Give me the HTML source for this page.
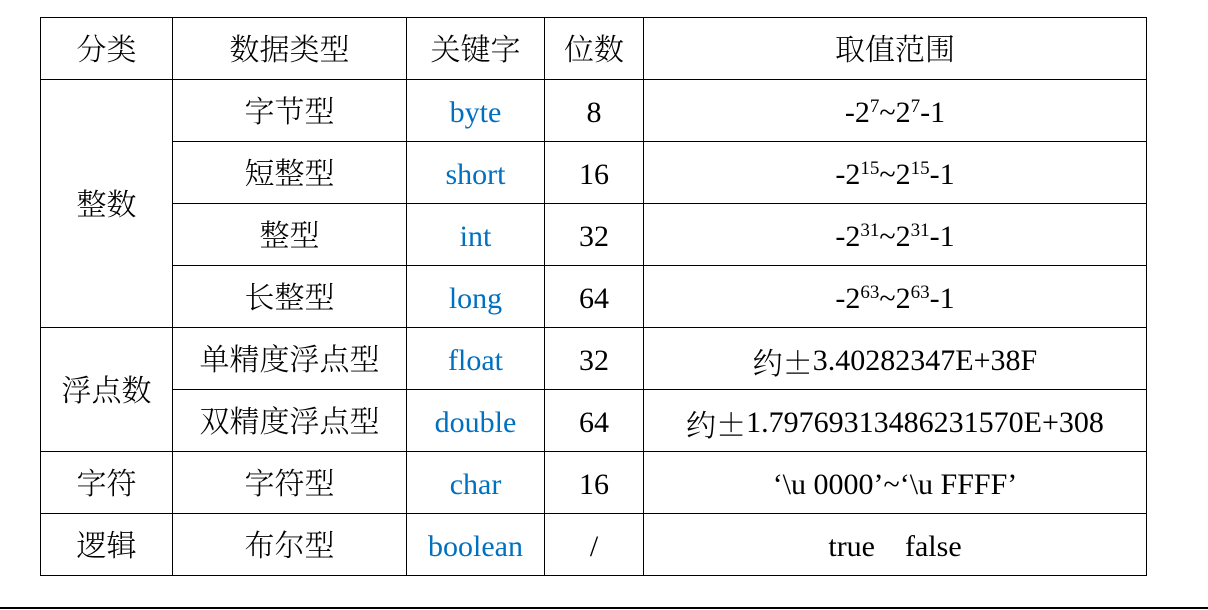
<!DOCTYPE html>
<html><head><meta charset="utf-8"><style>
html,body{margin:0;padding:0;background:#fff;width:1208px;height:610px;overflow:hidden;position:relative}
table{position:absolute;left:40px;top:17px;border-collapse:collapse;table-layout:fixed;width:1106px;
font-family:"Liberation Serif","Noto Serif CJK SC",serif;font-size:30px;color:#000}
td{border:1px solid #000;text-align:center;vertical-align:middle;padding:4px 0 0 0;height:57px;line-height:30px;box-sizing:content-box}
.c{font-size:30px;font-weight:300}
.pm{font-family:"Noto Serif CJK SC",serif;font-weight:300;font-size:30px;line-height:30px;display:inline-block;vertical-align:top}
.b{color:#0070C0}
sup{font-size:19px;vertical-align:0;position:relative;top:-10px;line-height:0}
.line{position:absolute;left:0;top:607px;width:1208px;height:2px;background:#000}
</style></head><body>
<table>
<colgroup><col style="width:132px"><col style="width:234px"><col style="width:138px"><col style="width:99px"><col style="width:503px"></colgroup>
<tr><td class="c">分类</td><td class="c">数据类型</td><td class="c">关键字</td><td class="c">位数</td><td class="c">取值范围</td></tr>
<tr><td rowspan="4" class="c">整数</td><td class="c">字节型</td><td class="b">byte</td><td>8</td><td>-2<sup>7</sup>~2<sup>7</sup>-1</td></tr>
<tr><td class="c">短整型</td><td class="b">short</td><td>16</td><td>-2<sup>15</sup>~2<sup>15</sup>-1</td></tr>
<tr><td class="c">整型</td><td class="b">int</td><td>32</td><td>-2<sup>31</sup>~2<sup>31</sup>-1</td></tr>
<tr><td class="c">长整型</td><td class="b">long</td><td>64</td><td>-2<sup>63</sup>~2<sup>63</sup>-1</td></tr>
<tr><td rowspan="2" class="c">浮点数</td><td class="c">单精度浮点型</td><td class="b">float</td><td>32</td><td><span class="pm">约±</span>3.40282347E+38F</td></tr>
<tr><td class="c">双精度浮点型</td><td class="b">double</td><td>64</td><td><span class="pm">约±</span>1.79769313486231570E+308</td></tr>
<tr><td class="c">字符</td><td class="c">字符型</td><td class="b">char</td><td>16</td><td>‘\u 0000’~‘\u FFFF’</td></tr>
<tr><td class="c">逻辑</td><td class="c">布尔型</td><td class="b">boolean</td><td>/</td><td>true&nbsp;&nbsp;&nbsp;&nbsp;false</td></tr>
</table>
<div class="line"></div>
</body></html>
